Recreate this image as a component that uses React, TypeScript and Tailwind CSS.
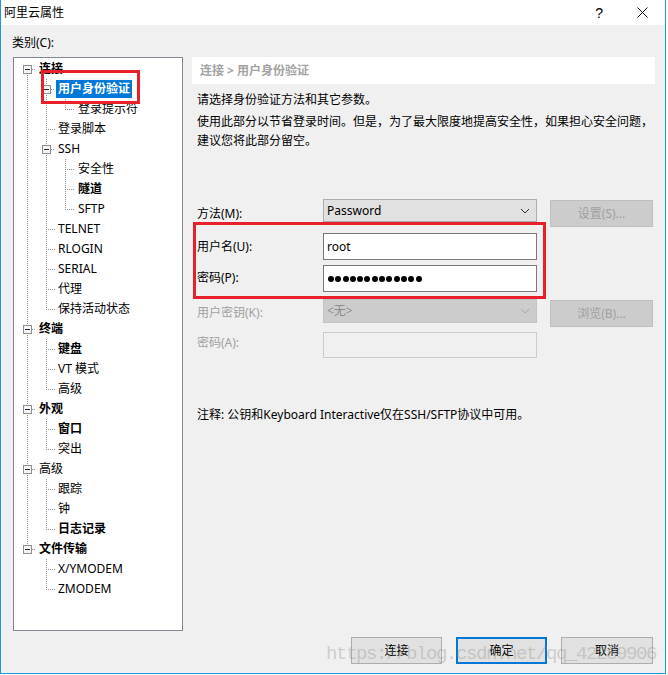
import React from "react";

type Row = [string, number, boolean, boolean];

const rows: Row[] = [
  ["连接", 0, true, true],
  ["用户身份验证", 1, true, true],
  ["登录提示符", 2, false, false],
  ["登录脚本", 1, false, false],
  ["SSH", 1, false, true],
  ["安全性", 2, false, false],
  ["隧道", 2, true, false],
  ["SFTP", 2, false, false],
  ["TELNET", 1, false, false],
  ["RLOGIN", 1, false, false],
  ["SERIAL", 1, false, false],
  ["代理", 1, false, false],
  ["保持活动状态", 1, false, false],
  ["终端", 0, true, true],
  ["键盘", 1, true, false],
  ["VT 模式", 1, false, false],
  ["高级", 1, false, false],
  ["外观", 0, true, true],
  ["窗口", 1, true, false],
  ["突出", 1, false, false],
  ["高级", 0, false, true],
  ["跟踪", 1, false, false],
  ["钟", 1, false, false],
  ["日志记录", 1, true, false],
  ["文件传输", 0, true, true],
  ["X/YMODEM", 1, false, false],
  ["ZMODEM", 1, false, false],
];

const LX = [13, 32, 51];
const TX = [25, 44, 64];
const cy = (i: number) => 11 + 20 * i;

function TreeLines() {
  const lines: React.ReactNode[] = [];
  const boxes: React.ReactNode[] = [];
  lines.push(
    <line key="root" x1={LX[0] + 0.5} y1={cy(0)} x2={LX[0] + 0.5} y2={cy(24) + 1} />
  );
  rows.forEach((r, i) => {
    const [, lvl, , has] = r;
    if (has) {
      let last = -1;
      for (let j = i + 1; j < rows.length; j++) {
        if (rows[j][1] <= lvl) break;
        if (rows[j][1] === lvl + 1) last = j;
      }
      if (last > 0) {
        lines.push(
          <line
            key={"v" + i}
            x1={LX[lvl + 1] + 0.5}
            y1={cy(i + 1) - 10}
            x2={LX[lvl + 1] + 0.5}
            y2={cy(last) + 1}
          />
        );
      }
      boxes.push(
        <g key={"b" + i}>
          <rect x={LX[lvl] - 4 + 0.5} y={cy(i) - 4 + 0.5} width={8} height={8} fill="#f4f4f4" stroke="#8e8f8f" />
          <line x1={LX[lvl] - 2} y1={cy(i) + 0.5} x2={LX[lvl] + 3} y2={cy(i) + 0.5} stroke="#1e2a44" />
        </g>
      );
    }
    const x1 = has ? LX[lvl] + 5 : LX[lvl];
    lines.push(
      <line key={"h" + i} x1={x1} y1={cy(i) + 0.5} x2={TX[lvl] - 3} y2={cy(i) + 0.5} />
    );
  });
  return (
    <svg className="absolute left-0 top-0" width={168} height={572} shapeRendering="crispEdges">
      <g stroke="#8f8f8f" strokeDasharray="1 1" strokeWidth={1}>
        {lines}
      </g>
      {boxes}
    </svg>
  );
}

function Chevron({ color }: { color: string }) {
  return (
    <svg width="10" height="6" viewBox="0 0 10 6">
      <path d="M1 1 L5 5 L9 1" fill="none" stroke={color} strokeWidth="1" />
    </svg>
  );
}

export default function App() {
  const padL = ["pl-[23px]", "pl-[42px]", "pl-[62px]"];
  return (
    <div className="relative w-[668px] h-[675px] bg-white font-[family-name:Noto_Sans,Noto_Sans_CJK_SC,sans-serif] text-[12px] leading-[16px] text-black overflow-hidden">
      <div className="w-[666px] h-[674px] border-l border-r border-b border-[#1b98d5] flex flex-col">
        {/* title bar */}
        <div className="h-[25px] bg-white flex items-center shrink-0">
          <span className="ml-[3px] text-[12px]">阿里云属性</span>
          <span className="ml-auto text-[14px] leading-[16px] mr-[34px] font-[family-name:Liberation_Sans,sans-serif]">?</span>
          <svg width="11" height="11" viewBox="0 0 11 11" className="mr-[17px] mb-[1px]">
            <path d="M0.5 0.5 L10.5 10.5 M10.5 0.5 L0.5 10.5" stroke="#111" strokeWidth="1" />
          </svg>
        </div>
        {/* body */}
        <div className="flex-1 bg-[#f0f0f0] flex flex-col pt-[10px]">
          <div className="ml-[11px]">类别(C):</div>
          <div className="flex mt-[6px] ml-[12px]">
            {/* tree */}
            <div className="relative w-[170px] h-[574px] bg-white border border-[#828790]">
              <TreeLines />
              <div className="relative flex flex-col pt-[1px]">
                {rows.map((r, i) => {
                  const [label, lvl, bold] = r;
                  const selected = i === 1;
                  return (
                    <div key={i} className={`h-[20px] flex items-center ${padL[lvl]}`}>
                      <span
                        className={`px-[2px] h-[18px] leading-[18px] ${bold ? "font-bold" : ""} ${
                          selected ? "bg-[#0078d7] text-white" : ""
                        }`}
                      >
                        {label}
                      </span>
                    </div>
                  );
                })}
              </div>
            </div>
            {/* right */}
            <div className="ml-[9px] w-[463px] h-[607px] flex flex-col">
              <div className="h-[27px] bg-white flex items-center pl-[8px] font-bold text-[#a3a3a3]">
                连接 &gt; 用户身份验证
              </div>
              <div className="pl-[5px]">
                <div className="mt-[8px] leading-[16px]">请选择身份验证方法和其它参数。</div>
                <div className="mt-[4px] leading-[19px]">
                  使用此部分以节省登录时间。但是，为了最大限度地提高安全性，如果担心安全问题，
                  <br />
                  建议您将此部分留空。
                </div>

                {/* row 1 */}
                <div className="mt-[49px] flex h-[28px]">
                  <div className="w-[126px] pt-[7px]">方法(M):</div>
                  <div className="w-[214px] h-[23px] bg-[#e1e1e1] border border-[#adadad] flex items-center pl-[3px] pr-[6px]">
                    <span>Password</span>
                    <span className="ml-auto">
                      <Chevron color="#333" />
                    </span>
                  </div>
                  <div className="ml-[13px] mt-[1px] w-[103px] h-[27px] bg-[#cccccc] border border-[#bfbfbf] flex items-center justify-center text-[#a0a0a0]">
                    设置(S)...
                  </div>
                </div>
                {/* row 2 */}
                <div className="mt-[6px] flex h-[27px]">
                  <div className="w-[126px] pt-[6px]">用户名(U):</div>
                  <div className="w-[214px] h-[27px] bg-white border border-[#7a7a7a] flex items-center pl-[3px]">
                    root
                  </div>
                </div>
                {/* row 3 */}
                <div className="mt-[5px] flex h-[27px]">
                  <div className="w-[126px] pt-[5px]">密码(P):</div>
                  <div className="w-[214px] h-[27px] bg-white border border-[#7a7a7a] flex items-center pl-[4px] gap-[1.3px]">
                    {Array.from({ length: 13 }).map((_, k) => (
                      <span key={k} className="w-[6px] h-[6px] rounded-full bg-black" />
                    ))}
                  </div>
                </div>
                {/* row 4 */}
                <div className="mt-[7px] flex h-[28px]">
                  <div className="w-[126px] pt-[6px] text-[#a0a0a0]">用户密钥(K):</div>
                  <div className="w-[214px] h-[24px] bg-[#cccccc] border border-[#c4c4c4] flex items-center pl-[3px] pr-[6px] text-[#8c8c8c]">
                    <span>&lt;无&gt;</span>
                    <span className="ml-auto">
                      <Chevron color="#a8a8a8" />
                    </span>
                  </div>
                  <div className="ml-[13px] mt-[1px] w-[103px] h-[27px] bg-[#cccccc] border border-[#bfbfbf] flex items-center justify-center text-[#a0a0a0]">
                    浏览(B)...
                  </div>
                </div>
                {/* row 5 */}
                <div className="mt-[5px] flex h-[26px]">
                  <div className="w-[126px] pt-[3px] text-[#a0a0a0]">密码(A):</div>
                  <div className="w-[214px] h-[26px] bg-[#f0f0f0] border border-[#cccccc]" />
                </div>

                <div className="mt-[49px]">注释: 公钥和Keyboard Interactive仅在SSH/SFTP协议中可用。</div>
              </div>

              <div className="mt-auto flex justify-end gap-[14px] pr-[2px] h-[27px]">
                <div className="w-[91px] h-[27px] bg-[#e1e1e1] border border-[#adadad] flex items-center justify-center">
                  连接
                </div>
                <div className="w-[91px] h-[27px] bg-[#e1e1e1] border-2 border-[#0078d7] flex items-center justify-center">
                  确定
                </div>
                <div className="w-[92px] h-[27px] bg-[#e1e1e1] border border-[#adadad] flex items-center justify-center">
                  取消
                </div>
              </div>
            </div>
          </div>
        </div>
      </div>

      {/* annotation boxes */}
      <div className="absolute left-[41px] top-[70px] w-[99px] h-[34px] border-[3px] border-[#e8202a]" />
      <div className="absolute left-[193px] top-[222px] w-[353px] h-[77px] border-[3px] border-[#e8202a]" />

      {/* watermark */}
      <div className="absolute left-[326px] top-[643px] text-[19px] leading-[22px] tracking-[-1.4px] text-[rgba(150,150,150,0.4)] font-[family-name:Liberation_Mono,monospace] whitespace-nowrap pointer-events-none">
        https://blog.csdn.net/qq_42289906
      </div>
    </div>
  );
}
